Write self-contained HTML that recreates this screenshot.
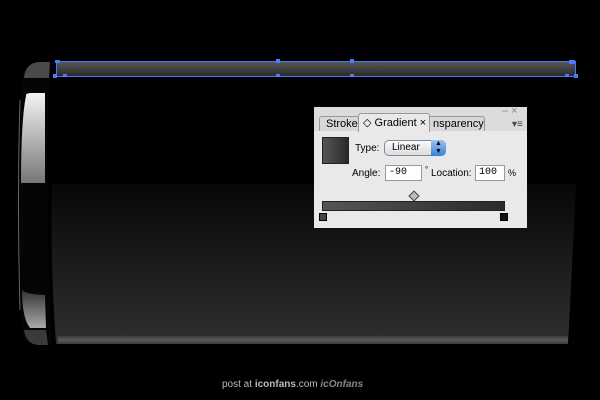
<!DOCTYPE html>
<html><head><meta charset="utf-8"><style>
body{margin:0;width:600px;height:400px;background:#000;overflow:hidden;position:relative;font-family:"Liberation Sans",sans-serif}
.panel{position:absolute;left:314px;top:107px;width:213px;height:121px;background:#e9e9e9;font-size:10px;color:#000}
.abs{position:absolute}
.box{position:absolute;background:#fff;border:1px solid #999;font-family:"Liberation Mono",monospace;font-size:10px;line-height:13px;padding-left:3px;box-sizing:border-box}
</style></head><body>
<svg width="600" height="400" style="position:absolute;left:0;top:0">
<defs>
<linearGradient id="body" x1="0" y1="0" x2="0" y2="1">
<stop offset="0" stop-color="#070707"/><stop offset="1" stop-color="#303030"/></linearGradient>
<linearGradient id="bar" x1="0" y1="0" x2="0" y2="1">
<stop offset="0" stop-color="#5a5a5a"/><stop offset="1" stop-color="#2a2a2a"/></linearGradient>
<linearGradient id="hl" x1="0" y1="0" x2="0" y2="1">
<stop offset="0" stop-color="#f4f4f4"/><stop offset="1" stop-color="#777"/></linearGradient>
<linearGradient id="capb" x1="0" y1="0" x2="0" y2="1">
<stop offset="0" stop-color="#333"/><stop offset="1" stop-color="#aaa"/></linearGradient>
<linearGradient id="strip" x1="0" y1="0" x2="0" y2="1">
<stop offset="0" stop-color="#3a3a3a"/><stop offset="0.5" stop-color="#5a5a5a"/><stop offset="1" stop-color="#3a3a3a"/></linearGradient>
</defs>
<path d="M52 184 L576 184 Q572 270 568 344 L56 344 Q50 260 52 184Z" fill="url(#body)"/>
<rect x="58" y="336" width="510" height="8" fill="url(#strip)"/>
<path d="M50 62 L38 62 Q24 64 22 80 Q18 200 22 330 Q24 344 38 345 L52 345 Q44 200 50 62Z" fill="#050505"/>
<path d="M50 62 L38 62 Q25 64 24 78 L49 78Z" fill="#4a4a4a"/>
<path d="M26 96 Q25 93 32 93 L45 93 L45 183 L21 183 Q21 120 26 96Z" fill="url(#hl)"/>
<path d="M22 290 Q25 294 45 295 L46 328 L30 328 Q22 318 22 290Z" fill="url(#capb)"/>
<path d="M38 345 Q26 344 24 330 L46 330 L48 345Z" fill="#3a3a3a"/>
<path d="M20 100 Q17 200 20 310" stroke="#666" stroke-width="1" fill="none"/>
<rect x="56" y="61" width="520" height="15" fill="url(#bar)"/>
<rect x="56.5" y="61.5" width="519" height="15" fill="none" stroke="#4477ff" stroke-width="1"/>
<g fill="#4a7cff">
<rect x="55" y="60" width="5" height="3"/><rect x="53" y="74" width="4" height="4"/><rect x="63" y="74" width="4" height="3"/>
<rect x="276" y="59" width="4" height="4"/><rect x="276" y="74" width="4" height="3"/>
<rect x="350" y="59" width="4" height="4"/><rect x="350" y="74" width="4" height="3"/>
<rect x="569" y="60" width="6" height="4"/><rect x="565" y="74" width="4" height="3"/><rect x="574" y="74" width="4" height="4"/>
</g>
</svg>
<div class="panel">
 <div class="abs" style="left:0;top:0;width:213px;height:24px;background:#dcdcdc"></div>
 <div class="abs" style="left:5px;top:9px;width:40px;height:15px;background:#d8d8d8;border:1px solid #999;border-bottom:none;border-radius:3px 3px 0 0;font-size:11px;line-height:14px;padding-left:6px;box-sizing:border-box">Stroke</div>
 <div class="abs" style="left:115px;top:9px;width:56px;height:15px;background:#d8d8d8;border:1px solid #999;border-bottom:none;border-radius:0 3px 0 0;font-size:11px;line-height:14px;padding-left:3px;box-sizing:border-box">nsparency</div>
 <div class="abs" style="left:44px;top:6px;width:72px;height:19px;background:#e9e9e9;border:1px solid #999;border-bottom:none;border-radius:3px 3px 0 0;font-size:11px;line-height:18px;padding-left:4px;box-sizing:border-box">◇ Gradient ×</div>
 <div class="abs" style="left:188px;top:-2px;font-size:11px;color:#888">– ×</div>
 <div class="abs" style="left:198px;top:12px;font-size:10px;color:#444">▾≡</div>
 <div class="abs" style="left:8px;top:30px;width:27px;height:27px;border:1px solid #222;box-sizing:border-box;background:linear-gradient(90deg,#555,#2a2a2a)"></div>
 <div class="abs" style="left:41px;top:36px">Type:</div>
 <div class="abs" style="left:70px;top:33px;width:62px;height:16px;border:1px solid #7a8aa0;border-radius:5px;background:linear-gradient(#fafafa,#ddd);box-sizing:border-box;line-height:14px;padding-left:7px">Linear</div>
 <div class="abs" style="left:117px;top:33px;width:15px;height:16px;border-radius:0 5px 5px 0;background:linear-gradient(#9cc4f4,#3a7fd8);color:#000;font-size:7px;line-height:8px;text-align:center">▲<br>▼</div>
 <div class="abs" style="left:38px;top:61px">Angle:</div>
 <div class="box" style="left:71px;top:58px;width:37px;height:16px">-90</div>
 <div class="abs" style="left:111px;top:58px;font-size:8px">°</div>
 <div class="abs" style="left:117px;top:61px">Location:</div>
 <div class="box" style="left:161px;top:58px;width:30px;height:16px">100</div>
 <div class="abs" style="left:194px;top:61px;font-size:9px">%</div>
 <div class="abs" style="left:96px;top:85px;width:6px;height:6px;background:#bbb;border:1px solid #444;transform:rotate(45deg)"></div>
 <div class="abs" style="left:8px;top:94px;width:183px;height:10px;border:1px solid #222;box-sizing:border-box;background:linear-gradient(90deg,#555,#2a2a2a)"></div>
 <div class="abs" style="left:5px;top:106px;width:8px;height:8px;border:1px solid #000;background:#444;box-sizing:border-box"></div>
 <div class="abs" style="left:186px;top:106px;width:8px;height:8px;border:1px solid #000;background:#111;box-sizing:border-box"></div>
</div>
<div class="abs" style="left:222px;top:379px;font-size:10px;color:#bbb">post at <b>iconfans</b>.com <i style="color:#888;font-weight:bold">icOnfans</i></div>
</body></html>
